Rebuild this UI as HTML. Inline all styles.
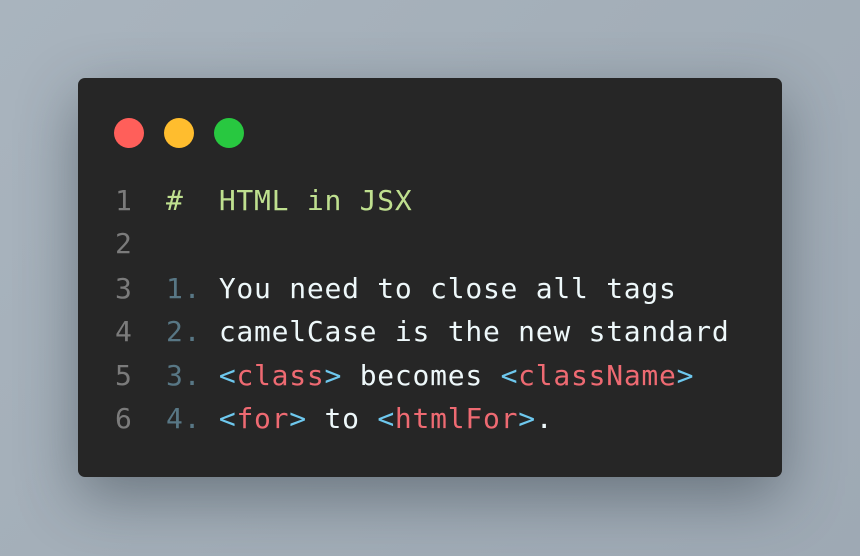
<!DOCTYPE html>
<html><head><meta charset="utf-8"><style>
html,body{margin:0;padding:0}
body{width:860px;height:556px;overflow:hidden;background:linear-gradient(135deg,#a9b4be 0%,#a3aeb8 50%,#9ea9b4 100%);position:relative}
.win{position:absolute;left:78px;top:78px;width:704px;height:399px;background:#262626;border-radius:7px;box-shadow:0 20px 60px rgba(40,50,60,.45)}
.dot{position:absolute;top:40px;width:30px;height:30px;border-radius:50%}
.l{position:absolute;left:0;height:44px;line-height:44px;font-family:"DejaVu Sans Mono","Liberation Mono",monospace;font-size:28px;letter-spacing:0.75px;white-space:pre;color:#eef8fa}
.n{position:absolute;left:37px;color:#7b7b7b}
.t{position:absolute;left:88px}
.g{color:#bfe08f}.m{color:#587785}.b{color:#6ec8ee}.r{color:#ee6a72}
</style></head><body>
<div class="win">
<div class="dot" style="left:36px;background:#ff5f5a"></div>
<div class="dot" style="left:86px;background:#ffbd2e"></div>
<div class="dot" style="left:136px;background:#28c840"></div>
<div class="l" style="top:101px"><span class="n">1</span><span class="t g">#  HTML in JSX</span></div>
<div class="l" style="top:144px"><span class="n">2</span></div>
<div class="l" style="top:189px"><span class="n">3</span><span class="t"><span class="m">1.</span> You need to close all tags</span></div>
<div class="l" style="top:232px"><span class="n">4</span><span class="t"><span class="m">2.</span> camelCase is the new standard</span></div>
<div class="l" style="top:276px"><span class="n">5</span><span class="t"><span class="m">3.</span> <span class="b">&lt;</span><span class="r">class</span><span class="b">&gt;</span> becomes <span class="b">&lt;</span><span class="r">className</span><span class="b">&gt;</span></span></div>
<div class="l" style="top:319px"><span class="n">6</span><span class="t"><span class="m">4.</span> <span class="b">&lt;</span><span class="r">for</span><span class="b">&gt;</span> to <span class="b">&lt;</span><span class="r">htmlFor</span><span class="b">&gt;</span>.</span></div>
</div>
</body></html>
